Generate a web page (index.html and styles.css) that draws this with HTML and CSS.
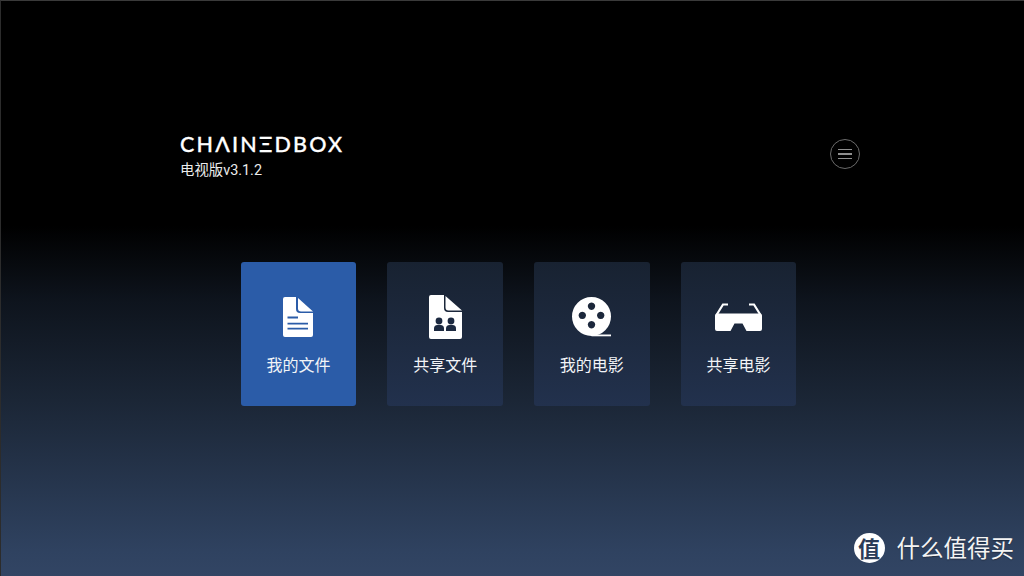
FILE: index.html
```html
<!DOCTYPE html>
<html lang="zh-CN">
<head>
    <meta charset="UTF-8">
    <meta name="viewport" content="width=device-width, initial-scale=1.0">
    <title>Chainedbox TV</title>
    <link rel="stylesheet" href="styles.css">
</head>
<body>

<div class="screen">

    <!-- Header -->
    <header class="top">
        <div class="brand">
            <div class="logo">CHΛINΞDBOX</div>
            <div class="version">电视版v3.1.2</div>
        </div>
        <button class="menu-btn" aria-label="menu">
            <span></span><span></span><span></span>
        </button>
    </header>

    <!-- Main tiles -->
    <main class="tiles">
        <div class="tile active">
            <div class="tile-icon">
                <svg width="30" height="40" viewBox="0 0 30 40">
                    <path fill="#fff" d="M2 0H13V12a4 4 0 0 0 4 4H30V38a2 2 0 0 1-2 2H2a2 2 0 0 1-2-2V2a2 2 0 0 1 2-2z"/>
                    <path fill="#fff" d="M15 1L30 14.5H18a3 3 0 0 1-3-3z"/>
                    <path stroke="#2b5ca8" stroke-width="1.8" d="M4.5 20.5H15M4.5 26.7H25M4.5 31.7H25"/>
                </svg>
            </div>
            <div class="tile-label">我的文件</div>
        </div>
        <div class="tile">
            <div class="tile-icon">
                <svg width="33" height="44" viewBox="0 0 33 44">
                    <path fill="#fff" d="M2 0H15V13a4 4 0 0 0 4 4H33V42a2 2 0 0 1-2 2H2a2 2 0 0 1-2-2V2a2 2 0 0 1 2-2z"/>
                    <path fill="#fff" d="M16.5 1L33 15.5H19.5a3 3 0 0 1-3-3z"/>
                    <g fill="#1c2940">
                        <circle cx="10" cy="26" r="3.4"/>
                        <circle cx="22" cy="26" r="3.4"/>
                        <path d="M5 36V33.5a3.5 3.5 0 0 1 3.5-3.5h3a3.5 3.5 0 0 1 3.5 3.5V36z"/>
                        <path d="M17 36V33.5a3.5 3.5 0 0 1 3.5-3.5h3a3.5 3.5 0 0 1 3.5 3.5V36z"/>
                    </g>
                </svg>
            </div>
            <div class="tile-label">共享文件</div>
        </div>
        <div class="tile">
            <div class="tile-icon">
                <svg width="39" height="40" viewBox="0 0 39 40">
                    <path fill="#fff" fill-rule="evenodd" d="M19.5 0a19.5 19.5 0 1 0 0 39a19.5 19.5 0 1 0 0-39z
                        M19.5 5.5a3.7 3.7 0 1 0 .01 0z
                        M19.5 24a3.7 3.7 0 1 0 .01 0z
                        M10.3 14.7a3.7 3.7 0 1 0 .01 0z
                        M28.7 14.7a3.7 3.7 0 1 0 .01 0z"/>
                    <rect fill="#fff" x="19.5" y="37.5" width="19.5" height="1.8"/>
                </svg>
            </div>
            <div class="tile-label">我的电影</div>
        </div>
        <div class="tile">
            <div class="tile-icon">
                <svg width="47" height="28" viewBox="0 0 47 28">
                    <path fill="none" stroke="#fff" stroke-width="2.2" d="M1.8 11.5L8 1.5H13M45.2 11.5L39 1.5H34"/>
                    <path fill="#fff" d="M2 10.5H45a2 2 0 0 1 2 2V26a2 2 0 0 1-2 2H31.5L27.5 20.5H19.5L15.5 28H2a2 2 0 0 1-2-2V12.5a2 2 0 0 1 2-2z"/>
                </svg>
            </div>
            <div class="tile-label">共享电影</div>
        </div>
    </main>

    <!-- Watermark -->
    <div class="watermark">
        <span class="watermark-mark">值</span>
        <span class="watermark-text">什么值得买</span>
    </div>

</div>

</body>
</html>
```

FILE: styles.css
```css
* { box-sizing: border-box; }
html, body { margin: 0; padding: 0; }
body { font-family: "Roboto", "Noto Sans CJK SC", sans-serif; color: white; background: #000; }

.screen { position: relative; width: 1024px; height: 576px; overflow: hidden; padding: 133px 164px 0 179px; border-top: 1px solid #3a3a3a; border-left: 1px solid #2c2c2c; background: linear-gradient(to bottom, #000 0, #000 225px, #0e141d 300px, #1b2636 400px, #2f4260 550px, #324564 576px); }

.top { display: flex; justify-content: space-between; align-items: flex-start; height: 128px; }
.logo { font-family: "Lato", sans-serif; font-size: 21.5px; font-weight: 500; line-height: 21px; letter-spacing: 2.2px; white-space: nowrap; -webkit-text-stroke: 0.3px white; }
.version { margin-top: 6px; font-size: 14.4px; line-height: 20px; color: #ececec; }

.menu-btn { display: flex; flex-direction: column; justify-content: center; align-items: center; gap: 3px; width: 30px; height: 30px; margin-top: 5px; padding: 0; border: 1px solid #6a6a6a; border-radius: 50%; background: transparent; }
.menu-btn span { display: block; width: 14px; height: 1.3px; background: #8f8f8f; }

.tiles { display: flex; gap: 31.3px; padding-left: 60.8px; }
.tile { display: flex; flex-direction: column; align-items: center; width: 115.4px; height: 144px; border-radius: 3px; background: linear-gradient(to bottom, #182231, #22314d); }
.tile.active { background: #2b5ca8; }
.tile-icon { display: flex; justify-content: center; align-items: center; height: 44px; margin-top: 33px; }
.tile-label { margin-top: 15px; font-size: 16px; line-height: 24px; color: #f2f4f7; }

.watermark { position: absolute; right: 10px; bottom: 14px; display: flex; align-items: center; gap: 12px; text-shadow: 0 1px 1px rgba(0,0,0,0.3); }
.watermark-mark { width: 31px; height: 30px; margin-bottom: -1px; border-radius: 50%; background: white; color: #2b3c58; font-family: "Noto Sans CJK SC", sans-serif; font-size: 22px; font-weight: 700; line-height: 29px; text-align: center; text-shadow: none; }
.watermark-text { font-family: "Noto Sans CJK SC", sans-serif; font-size: 23.5px; line-height: 30px; color: #f4f4f4; }
```
